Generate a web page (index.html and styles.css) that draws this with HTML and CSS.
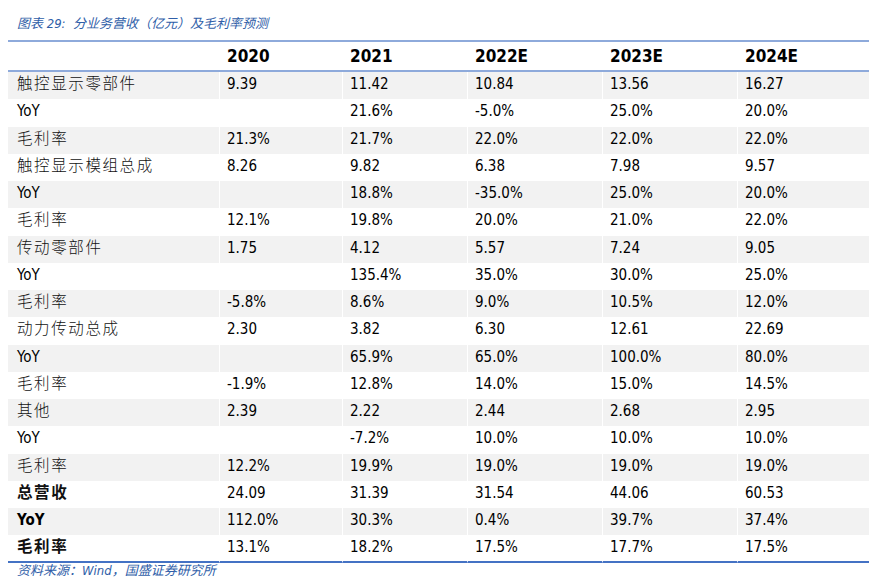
FILE: index.html
```html
<!DOCTYPE html>
<html lang="zh-CN">
<head>
<meta charset="utf-8">
<title>分业务营收及毛利率预测</title>
<link rel="stylesheet" href="styles.css">
</head>
<body>
<div class="page">
  <div class="caption">图表 29:&nbsp; 分业务营收（亿元）及毛利率预测</div>
  <table class="data">
    <colgroup>
      <col class="c-label"><col class="c-2020"><col class="c-2021"><col class="c-2022"><col class="c-2023"><col class="c-2024">
    </colgroup>
    <thead>
      <tr><th></th><th>2020</th><th>2021</th><th>2022E</th><th>2023E</th><th>2024E</th></tr>
    </thead>
    <tbody>
      <tr><td class="zh">触控显示零部件</td><td>9.39</td><td>11.42</td><td>10.84</td><td>13.56</td><td>16.27</td></tr>
      <tr><td>YoY</td><td></td><td>21.6%</td><td>-5.0%</td><td>25.0%</td><td>20.0%</td></tr>
      <tr><td class="zh">毛利率</td><td>21.3%</td><td>21.7%</td><td>22.0%</td><td>22.0%</td><td>22.0%</td></tr>
      <tr><td class="zh">触控显示模组总成</td><td>8.26</td><td>9.82</td><td>6.38</td><td>7.98</td><td>9.57</td></tr>
      <tr><td>YoY</td><td></td><td>18.8%</td><td>-35.0%</td><td>25.0%</td><td>20.0%</td></tr>
      <tr><td class="zh">毛利率</td><td>12.1%</td><td>19.8%</td><td>20.0%</td><td>21.0%</td><td>22.0%</td></tr>
      <tr><td class="zh">传动零部件</td><td>1.75</td><td>4.12</td><td>5.57</td><td>7.24</td><td>9.05</td></tr>
      <tr><td>YoY</td><td></td><td>135.4%</td><td>35.0%</td><td>30.0%</td><td>25.0%</td></tr>
      <tr><td class="zh">毛利率</td><td>-5.8%</td><td>8.6%</td><td>9.0%</td><td>10.5%</td><td>12.0%</td></tr>
      <tr><td class="zh">动力传动总成</td><td>2.30</td><td>3.82</td><td>6.30</td><td>12.61</td><td>22.69</td></tr>
      <tr><td>YoY</td><td></td><td>65.9%</td><td>65.0%</td><td>100.0%</td><td>80.0%</td></tr>
      <tr><td class="zh">毛利率</td><td>-1.9%</td><td>12.8%</td><td>14.0%</td><td>15.0%</td><td>14.5%</td></tr>
      <tr><td class="zh">其他</td><td>2.39</td><td>2.22</td><td>2.44</td><td>2.68</td><td>2.95</td></tr>
      <tr><td>YoY</td><td></td><td>-7.2%</td><td>10.0%</td><td>10.0%</td><td>10.0%</td></tr>
      <tr><td class="zh">毛利率</td><td>12.2%</td><td>19.9%</td><td>19.0%</td><td>19.0%</td><td>19.0%</td></tr>
      <tr><td class="zh bold">总营收</td><td>24.09</td><td>31.39</td><td>31.54</td><td>44.06</td><td>60.53</td></tr>
      <tr><td class="bold">YoY</td><td>112.0%</td><td>30.3%</td><td>0.4%</td><td>39.7%</td><td>37.4%</td></tr>
      <tr class="last"><td class="zh bold">毛利率</td><td>13.1%</td><td>18.2%</td><td>17.5%</td><td>17.7%</td><td>17.5%</td></tr>
    </tbody>
  </table>
  <div class="source">资料来源：Wind，国盛证券研究所</div>
</div>
</body>
</html>
```

FILE: styles.css
```css
html, body {
  margin: 0;
  padding: 0;
  background: #ffffff;
}

body {
  font-family: "DejaVu Sans Condensed", "DejaVu Sans", "Noto Sans CJK SC", sans-serif;
  font-stretch: condensed;
  color: #000000;
  overflow: hidden;
}

.page {
  padding-left: 8px;
  width: 861px;
}

.caption {
  height: 24px;
  padding-top: 16px;
  padding-left: 9px;
  font-size: 13px;
  line-height: 16px;
  font-style: italic;
  color: #2f5ea8;
  white-space: nowrap;
}

.data {
  width: 861px;
  table-layout: fixed;
  border-collapse: separate;
  border-spacing: 0;
}

.c-label { width: 211px; }
.c-2020 { width: 123px; }
.c-2021 { width: 125px; }
.c-2022 { width: 135px; }
.c-2023 { width: 135px; }
.c-2024 { width: 132px; }

.data th {
  height: 28px;
  padding: 0 0 0 8px;
  border-top: 2px solid #8eaadb;
  border-bottom: 2px solid #8eaadb;
  font-size: 17px;
  font-weight: bold;
  line-height: 26px;
  text-align: left;
  vertical-align: middle;
}

.data th:first-child {
  padding-left: 9px;
}

.data tbody tr {
  height: 27.25px;
}

.data tbody tr:nth-child(odd) {
  background: #f2f2f2;
}

.data td {
  padding: 3px 0 0 7px;
  border-left: 1px solid #ffffff;
  font-size: 15px;
  line-height: 18px;
  vertical-align: top;
  white-space: nowrap;
}

.data td:first-child {
  padding-left: 9px;
  border-left: 0;
}

.data td.zh {
  padding-top: 1px;
  font-family: "Noto Sans CJK SC", sans-serif;
  font-size: 15.5px;
  font-weight: 300;
  letter-spacing: 1.6px;
  color: #111111;
}

.data td.bold {
  font-weight: bold;
}

.data tr.last td {
  border-bottom: 2px solid #4472c4;
}

.source {
  padding-top: 1px;
  padding-left: 9px;
  font-size: 13px;
  line-height: 14px;
  font-style: italic;
  color: #2f5ea8;
  white-space: nowrap;
}
```
